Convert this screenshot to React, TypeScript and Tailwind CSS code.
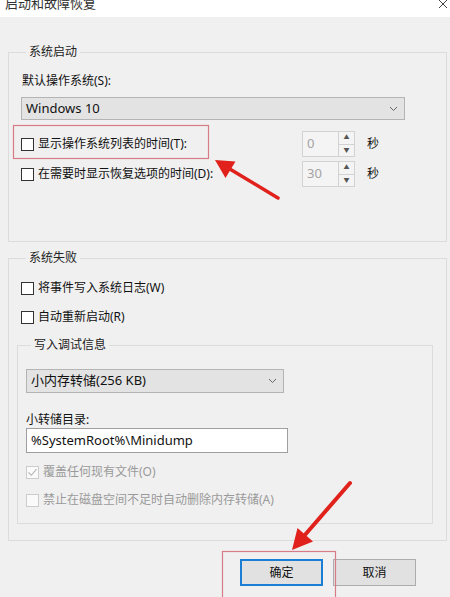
import React from 'react';

const font = { fontFamily: '"Noto Sans", "Noto Sans CJK SC", sans-serif' };

function Check({ checked = false, disabled = false }: { checked?: boolean; disabled?: boolean }) {
    return (
        <span
            className={`w-[13px] h-[13px] shrink-0 border flex items-center justify-center ${
                disabled ? 'border-[#cccccc] bg-[#fafafa]' : 'border-[#333333] bg-white'
            }`}
        >
            {checked && (
                <svg width="11" height="11" viewBox="0 0 11 11">
                    <path d="M1.5 5.5 L4.3 8.3 L9.5 2.2" fill="none" stroke={disabled ? '#b5b5b5' : '#333'} strokeWidth="1.1" />
                </svg>
            )}
        </span>
    );
}

function CheckRow({ label, checked, disabled }: { label: string; checked?: boolean; disabled?: boolean }) {
    return (
        <div className="flex items-center h-[18px] gap-[4px]">
            <Check checked={checked} disabled={disabled} />
            <span className={`text-[12px] leading-[16px] ${disabled ? 'text-[#9a9a9a]' : 'text-[#111]'}`}>{label}</span>
        </div>
    );
}

function Chevron() {
    return (
        <svg width="9" height="6" viewBox="0 0 9 6">
            <path d="M1 1 L4.5 4.5 L8 1" fill="none" stroke="#666" strokeWidth="1" />
        </svg>
    );
}

function Select({ value, width, height }: { value: string; width: string; height: string }) {
    return (
        <div
            className={`${width} ${height} flex items-center justify-between bg-[#e3e3e3] border border-[#b4b4b4] pl-[4px] pr-[6px]`}
        >
            <span className="text-[13px] text-[#111]">{value}</span>
            <Chevron />
        </div>
    );
}

function Spinner({ value }: { value: string }) {
    return (
        <div className="flex w-[53px] h-[26px] border border-[#d2d2d2] bg-[#f4f4f4]">
            <div className="flex-1 flex items-center pl-[4px] text-[13px] text-[#a3a3a3]">{value}</div>
            <div className="w-[16px] border-l border-[#d2d2d2] flex flex-col">
                <div className="flex-1 flex items-center justify-center border-b border-[#d2d2d2] text-[6px] text-[#555]">▲</div>
                <div className="flex-1 flex items-center justify-center text-[6px] text-[#555]">▼</div>
            </div>
        </div>
    );
}

export default function App() {
    return (
        <div className="relative w-[450px] h-[597px] overflow-hidden bg-[#f0f0f0]" style={font}>
            {/* 标题栏 */}
            <div className="h-[17px] bg-white flex justify-between overflow-hidden">
                <span className="ml-[5px] -mt-[5px] text-[13px] leading-[16px] text-[#333]">启动和故障恢复</span>
                <svg width="10" height="9" viewBox="0 0 10 9" className="mr-[2px]">
                    <path d="M1 0 L9 8 M9 0 L1 8" stroke="#444" strokeWidth="1" />
                </svg>
            </div>

            {/* 系统启动 */}
            <fieldset className="ml-[8px] mt-[28px] w-[439px] h-[197px] border border-[#dcdcdc] pl-[12px]">
                <legend className="ml-[5px] px-[3px] text-[12px] leading-[14px] text-[#222]">系统启动</legend>
                <div className="mt-[14px] text-[12px] leading-[16px] text-[#111] pl-[1px]">默认操作系统(S):</div>
                <div className="mt-[8px]">
                    <Select value="Windows 10" width="w-[384px]" height="h-[23px]" />
                </div>
                <div className="mt-[11px] flex items-center h-[26px]">
                    <div className="w-[281px]">
                        <CheckRow label="显示操作系统列表的时间(T):" />
                    </div>
                    <Spinner value="0" />
                    <span className="ml-[12px] text-[12px] text-[#111]">秒</span>
                </div>
                <div className="mt-[4px] flex items-center h-[26px]">
                    <div className="w-[281px]">
                        <CheckRow label="在需要时显示恢复选项的时间(D):" />
                    </div>
                    <Spinner value="30" />
                    <span className="ml-[12px] text-[12px] text-[#111]">秒</span>
                </div>
            </fieldset>

            {/* 系统失败 */}
            <fieldset className="ml-[8px] mt-[9px] w-[439px] h-[290px] border border-[#dcdcdc] pl-[12px]">
                <legend className="ml-[5px] px-[3px] text-[12px] leading-[14px] text-[#222]">系统失败</legend>
                <div className="mt-[14px]">
                    <CheckRow label="将事件写入系统日志(W)" />
                </div>
                <div className="mt-[11px]">
                    <CheckRow label="自动重新启动(R)" />
                </div>

                <fieldset className="-ml-[4px] mt-[12px] w-[416px] h-[186px] border border-[#dcdcdc] pl-[8px]">
                    <legend className="ml-[5px] px-[3px] text-[12px] leading-[14px] text-[#222]">写入调试信息</legend>
                    <div className="mt-[17px]">
                        <Select value="小内存转储(256 KB)" width="w-[258px]" height="h-[24px]" />
                    </div>
                    <div className="mt-[19px] text-[12px] leading-[16px] text-[#111]">小转储目录:</div>
                    <div className="w-[262px] h-[25px] bg-white border border-[#9f9f9f] flex items-center pl-[4px] text-[13px] text-[#111]">
                        %SystemRoot%\Minidump
                    </div>
                    <div className="mt-[10px]">
                        <CheckRow label="覆盖任何现有文件(O)" checked disabled />
                    </div>
                    <div className="mt-[10px]">
                        <CheckRow label="禁止在磁盘空间不足时自动删除内存转储(A)" disabled />
                    </div>
                </fieldset>
            </fieldset>

            {/* 按钮 */}
            <div className="mt-[18px] flex justify-end gap-[10px] pr-[34px]">
                <button className="w-[83px] h-[27px] bg-[#e1e1e1] border-2 border-[#1a7fd4] text-[12px] text-[#111]">确定</button>
                <button className="w-[83px] h-[27px] bg-[#e1e1e1] border border-[#adadad] text-[12px] text-[#111]">取消</button>
            </div>

            {/* 标注 */}
            <svg className="absolute inset-0 pointer-events-none" width="450" height="597" viewBox="0 0 450 597">
                <rect x="13.5" y="125.5" width="195" height="33" fill="none" stroke="#d77b86" strokeWidth="1.2" />
                <rect x="222.5" y="551.5" width="113" height="60" fill="none" stroke="#d77b86" strokeWidth="1.2" />
                <line x1="278" y1="198" x2="229" y2="168.5" stroke="#e0211c" strokeWidth="3.5" strokeLinecap="round" />
                <polygon points="215,160 235.5,161.5 225.5,178" fill="#e0211c" />
                <line x1="350" y1="483" x2="304" y2="536" stroke="#e0211c" strokeWidth="4" strokeLinecap="round" />
                <polygon points="292,550 297.5,528 313,541.5" fill="#e0211c" />
            </svg>
        </div>
    );
}
